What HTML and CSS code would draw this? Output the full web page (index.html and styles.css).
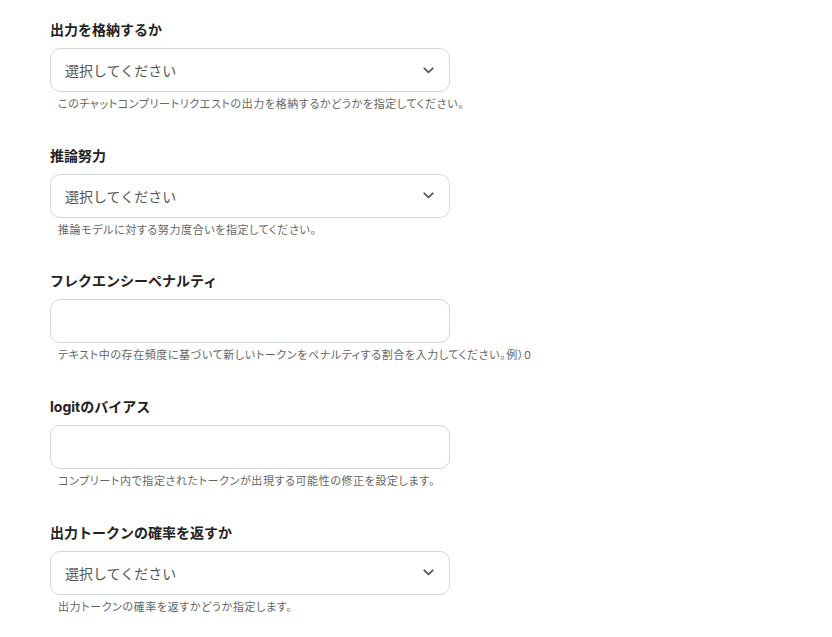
FILE: index.html
```html
<!DOCTYPE html>
<html lang="ja">
<head>
<meta charset="utf-8">
<link rel="stylesheet" href="styles.css">
</head>
<body>
<div class="form">
  <div class="field">
    <div class="label">出力を格納するか</div>
    <div class="box select"><span class="placeholder">選択してください</span>
      <svg class="chev" width="11" height="7" viewBox="0 0 11 7"><path d="M1.3 1.3 L5.5 5.3 L9.7 1.3" fill="none" stroke="#595959" stroke-width="1.8" stroke-linecap="round" stroke-linejoin="round"/></svg>
    </div>
    <div class="help">このチャットコンプリートリクエストの出力を格納するかどうかを指定してください。</div>
  </div>
  <div class="field">
    <div class="label">推論努力</div>
    <div class="box select"><span class="placeholder">選択してください</span>
      <svg class="chev" width="11" height="7" viewBox="0 0 11 7"><path d="M1.3 1.3 L5.5 5.3 L9.7 1.3" fill="none" stroke="#595959" stroke-width="1.8" stroke-linecap="round" stroke-linejoin="round"/></svg>
    </div>
    <div class="help">推論モデルに対する努力度合いを指定してください。</div>
  </div>
  <div class="field">
    <div class="label">フレクエンシーペナルティ</div>
    <div class="box"></div>
    <div class="help">テキスト中の存在頻度に基づいて新しいトークンをペナルティする割合を入力してください。例）0</div>
  </div>
  <div class="field">
    <div class="label">logitのバイアス</div>
    <div class="box"></div>
    <div class="help">コンプリート内で指定されたトークンが出現する可能性の修正を設定します。</div>
  </div>
  <div class="field">
    <div class="label">出力トークンの確率を返すか</div>
    <div class="box select"><span class="placeholder">選択してください</span>
      <svg class="chev" width="11" height="7" viewBox="0 0 11 7"><path d="M1.3 1.3 L5.5 5.3 L9.7 1.3" fill="none" stroke="#595959" stroke-width="1.8" stroke-linecap="round" stroke-linejoin="round"/></svg>
    </div>
    <div class="help">出力トークンの確率を返すかどうか指定します。</div>
  </div>
</div>
</body>
</html>
```
FILE: styles.css
```css
html, body {
  margin: 0;
  padding: 0;
  background: #fff;
}
body {
  font-family: "Inter", "Noto Sans CJK JP", sans-serif;
  color: #222;
}
.form {
  padding: 20px 0 0 50px;
  display: flex;
  flex-direction: column;
  gap: 34.7px;
}
.field {
  display: flex;
  flex-direction: column;
  width: 400px;
}
.label {
  font-size: 14px;
  font-weight: 700;
  line-height: 20px;
  color: #222;
}
.box {
  margin-top: 8px;
  height: 44px;
  box-sizing: border-box;
  border: 1px solid #d4d7dd;
  border-radius: 10px;
  background: #fff;
  display: flex;
  align-items: center;
  justify-content: space-between;
  padding: 0 15px 0 14px;
}
.placeholder {
  font-size: 14px;
  color: #555;
}
.chev {
  display: block;
}
.help {
  margin-top: 5px;
  padding-left: 8px;
  font-size: 11px;
  line-height: 14px;
  color: #666;
  white-space: nowrap;
  font-feature-settings: "palt";
  letter-spacing: 0.6px;
}
```
